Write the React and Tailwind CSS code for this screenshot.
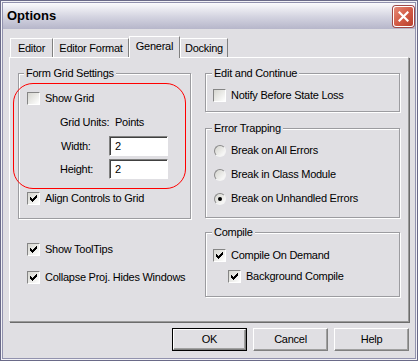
import React from "react";

const tick = [
  [6],
  [5, 6],
  [0, 4, 5, 6],
  [0, 1, 3, 4, 5],
  [0, 1, 2, 3, 4],
  [1, 2, 3],
  [2],
];

const CheckMark = () => (
  <svg width="7" height="7" viewBox="0 0 7 7" shapeRendering="crispEdges">
    {tick.map((cols, y) =>
      cols.map((x) => <rect key={`${x}-${y}`} x={x} y={y} width="1" height="1" fill="#000" />)
    )}
  </svg>
);

const Check = ({ checked, label }) => (
  <div className="flex items-center gap-[5px] h-[13px]">
    <span className="w-[13px] h-[13px] shrink-0 flex items-center justify-center border border-t-[#858585] border-l-[#858585] border-b-white border-r-white bg-linear-to-br from-[#d6d6d0] to-white">
      {checked && <CheckMark />}
    </span>
    <span className="leading-[13px] whitespace-nowrap">{label}</span>
  </div>
);

const Radio = ({ checked, label }) => (
  <div className="flex items-center gap-[5px] h-[13px]">
    <span className="w-[12px] h-[12px] ml-px shrink-0 rounded-full flex items-center justify-center border border-t-[#8a8a8a] border-l-[#8a8a8a] border-b-[#f4f4f4] border-r-[#f4f4f4] bg-linear-to-br from-[#d4d4ce] to-white">
      {checked && <span className="w-[4px] h-[4px] rounded-full bg-black" />}
    </span>
    <span className="leading-[13px] whitespace-nowrap">{label}</span>
  </div>
);

// legend sits inside the fieldset padding, so pull it back with a negative margin
const Group = ({ title, className = "", legend = "-ml-[1px]", children }) => (
  <fieldset
    className={`border border-[#9c9ca0] shadow-[inset_1px_1px_0_#fff,1px_1px_0_#fff] ${className}`}
  >
    <legend className={`${legend} px-[2px] leading-[13px] bg-[#e0dfe3]`}>{title}</legend>
    {children}
  </fieldset>
);

const Field = ({ value }) => (
  <div className="w-[59px] h-[20px] bg-white border border-t-[#808080] border-l-[#808080] border-b-white border-r-white shadow-[inset_1px_1px_0_#404040] flex items-center pl-[5px]">
    {value}
  </div>
);

const Tab = ({ label, width, active }) => (
  <div
    className={`flex items-center justify-center bg-[#e0dfe3] border-t border-l border-t-white border-l-white border-r border-r-[#808080] ${width} ${
      active ? "h-[22px] -mb-px relative z-10 pb-[2px]" : "h-[19px]"
    }`}
  >
    {label}
  </div>
);

const Button = ({ label, def }) => (
  <div className={`w-[75px] h-[23px] ${def ? "border border-black" : ""}`}>
    <div className="w-full h-full flex items-center justify-center bg-[#e0dfe3] border border-t-white border-l-white border-b-[#808080] border-r-[#808080] shadow-[inset_-1px_-1px_0_#a0a0a0]">
      {label}
    </div>
  </div>
);

export default function App() {
  return (
    <div className="relative w-[418px] h-[361px] border border-[#6a6a88] bg-[#f2f2f6] p-px font-['Liberation_Sans',Arial,sans-serif] text-[11px] tracking-[-0.25px] text-black">
      <div className="h-full border border-[#9292ae] flex flex-col">
        <div className="h-[26px] shrink-0 flex items-center justify-between pl-[4px] pr-[1px] bg-linear-to-b from-[#fbfbfd] via-[#d6d6e2] to-[#b6b6ca]">
          <span className="font-bold text-[13px] tracking-normal">Options</span>
          <span className="w-[21px] h-[21px] rounded-[3px] border border-white bg-linear-to-br from-[#e58a78] via-[#d35c47] to-[#b8402e] flex items-center justify-center shadow-[0_0_0_1px_#a04848]">
            <svg width="11" height="11" viewBox="0 0 11 11">
              <path d="M1.5 1.5 L9.5 9.5 M9.5 1.5 L1.5 9.5" stroke="#fff" strokeWidth="2.2" strokeLinecap="square" />
            </svg>
          </span>
        </div>

        <div className="flex-1 bg-[#e0dfe3] pl-[6px] pt-[7px]">
          <div className="flex items-end pl-px">
            <Tab label="Editor" width="w-[43px]" />
            <Tab label="Editor Format" width="w-[76px]" />
            <Tab label="General" width="w-[51px]" active />
            <Tab label="Docking" width="w-[48px]" />
          </div>

          <div className="w-[400px] h-[265px] border border-t-white border-l-white border-b-[#9a9a9a] border-r-[#9a9a9a] shadow-[1px_1px_0_#6c6c6c] pl-[8px] pt-[9px] flex gap-[14px]">
            <div className="w-[173px] flex flex-col">
              <Group title="Form Grid Settings" legend="-ml-[3px]" className="pl-[8px] pb-[13px]">
                <div className="mt-[12px]">
                  <Check label="Show Grid" />
                </div>
                <div className="mt-[11px] h-[13px] flex items-center pl-[33px] leading-[13px]">
                  <span className="w-[55px]">Grid Units:</span>
                  <span>Points</span>
                </div>
                <div className="mt-[7px] flex items-center pl-[34px]">
                  <span className="w-[48px]">Width:</span>
                  <Field value="2" />
                </div>
                <div className="mt-[3px] flex items-center pl-[33px]">
                  <span className="w-[49px]">Height:</span>
                  <Field value="2" />
                </div>
                <div className="mt-[13px]">
                  <Check checked label="Align Controls to Grid" />
                </div>
              </Group>
              <div className="pl-[9px] mt-[24px] flex flex-col gap-[15px]">
                <Check checked label="Show ToolTips" />
                <Check checked label="Collapse Proj. Hides Windows" />
              </div>
            </div>

            <div className="w-[195px] flex flex-col">
              <Group title="Edit and Continue" className="pl-[7px] pb-[9px]">
                <div className="mt-[9px]">
                  <Check label="Notify Before State Loss" />
                </div>
              </Group>
              <Group title="Error Trapping" className="mt-[10px] pl-[7px] pb-[12px]">
                <div className="mt-[9px] flex flex-col gap-[11px]">
                  <Radio label="Break on All Errors" />
                  <Radio label="Break in Class Module" />
                  <Radio checked label="Break on Unhandled Errors" />
                </div>
              </Group>
              <Group title="Compile" className="mt-[8px] pl-[7px] pb-[13px]">
                <div className="mt-[10px]">
                  <Check checked label="Compile On Demand" />
                </div>
                <div className="mt-[8px] pl-[15px]">
                  <Check checked label="Background Compile" />
                </div>
              </Group>
            </div>
          </div>

          <div className="w-[400px] mt-[6px] flex justify-end gap-[6px]">
            <Button label="OK" def />
            <Button label="Cancel" />
            <Button label="Help" />
          </div>
        </div>
      </div>

      <div className="absolute left-[12px] top-[82px] w-[173px] h-[106px] border border-[#ff0000] rounded-[20px] pointer-events-none" />
    </div>
  );
}
